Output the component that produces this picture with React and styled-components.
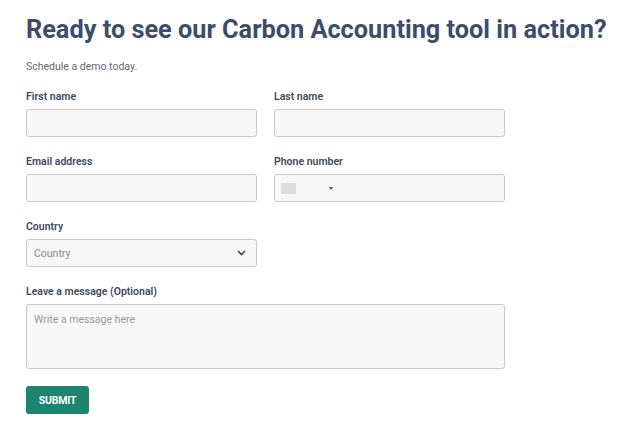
import React from "react";
import styled, { createGlobalStyle } from "styled-components";

const GlobalStyle = createGlobalStyle`
  body {
    margin: 0;
    background: #ffffff;
    font-family: Roboto, "Liberation Sans", Arial, sans-serif;
  }
`;

const Page = styled.div`
  padding: 14px 26px 0 26px;
`;

const Title = styled.h1`
  margin: 0;
  font-size: 25.3px;
  line-height: 31px;
  font-weight: 700;
  color: #3d4d69;
  white-space: nowrap;
`;

const Subtitle = styled.p`
  margin: 14px 0 0;
  font-size: 10.5px;
  line-height: 16px;
  color: #626876;
`;

const Form = styled.form`
  margin-top: 14px;
  width: 479px;
  display: grid;
  grid-template-columns: 231px 231px;
  column-gap: 17px;
  row-gap: 17px;
`;

const Field = styled.div`
  display: flex;
  flex-direction: column;
  gap: 4px;
  grid-column: ${(p) => (p.$wide ? "1 / span 2" : "auto")};
`;

const Label = styled.label`
  font-size: 10.5px;
  line-height: 16px;
  font-weight: 600;
  color: #3d4a60;
`;

const Input = styled.input`
  box-sizing: border-box;
  height: 28px;
  width: 100%;
  background: #f7f7f7;
  border: 1px solid #c9c9c9;
  border-radius: 3px;
  font-family: inherit;
  font-size: 11px;
  padding: 0 7px;
  outline: none;
`;

const PhoneBox = styled.div`
  box-sizing: border-box;
  height: 28px;
  background: #f7f7f7;
  border: 1px solid #c9c9c9;
  border-radius: 3px;
  display: flex;
  align-items: center;
  padding-left: 6px;
`;

const Flag = styled.span`
  width: 15px;
  height: 11px;
  background: #dcdcdc;
`;

const Caret = styled.span`
  margin-left: 33px;
  width: 0;
  height: 0;
  border-left: 2px solid transparent;
  border-right: 2px solid transparent;
  border-top: 3px solid #555;
`;

const SelectBox = styled.div`
  box-sizing: border-box;
  height: 28px;
  background: #f7f7f7;
  border: 1px solid #c9c9c9;
  border-radius: 3px;
  display: flex;
  align-items: center;
  justify-content: space-between;
  padding: 0 10px 0 7px;
  font-size: 10.5px;
  color: #8a8a8a;
`;

const TextArea = styled.textarea`
  box-sizing: border-box;
  height: 65px;
  width: 100%;
  resize: none;
  background: #f7f7f7;
  border: 1px solid #c9c9c9;
  border-radius: 3px;
  font-family: inherit;
  font-size: 10.5px;
  padding: 8px 7px;
  outline: none;
  &::placeholder {
    color: #9a9a9a;
  }
`;

const SubmitButton = styled.button`
  margin-top: 17px;
  width: 63px;
  height: 28px;
  background: #1b8570;
  border: none;
  border-radius: 3px;
  color: #ffffff;
  font-family: inherit;
  font-size: 10.5px;
  font-weight: 700;
  letter-spacing: -0.2px;
  cursor: pointer;
`;

function Chevron() {
  return (
    <svg width="9" height="6" viewBox="0 0 9 6" fill="none">
      <path d="M1 1l3.5 3.5L8 1" stroke="#444" strokeWidth="1.6" />
    </svg>
  );
}

export default function App() {
  return (
    <>
      <GlobalStyle />
      <Page>
        <Title>Ready to see our Carbon Accounting tool in action?</Title>
        <Subtitle>Schedule a demo today.</Subtitle>
        <Form onSubmit={(e) => e.preventDefault()}>
          <Field>
            <Label>First name</Label>
            <Input />
          </Field>
          <Field>
            <Label>Last name</Label>
            <Input />
          </Field>
          <Field>
            <Label>Email address</Label>
            <Input />
          </Field>
          <Field>
            <Label>Phone number</Label>
            <PhoneBox>
              <Flag />
              <Caret />
            </PhoneBox>
          </Field>
          <Field>
            <Label>Country</Label>
            <SelectBox>
              <span>Country</span>
              <Chevron />
            </SelectBox>
          </Field>
          <div />
          <Field $wide>
            <Label>Leave a message (Optional)</Label>
            <TextArea placeholder="Write a message here" />
          </Field>
        </Form>
        <SubmitButton>SUBMIT</SubmitButton>
      </Page>
    </>
  );
}
